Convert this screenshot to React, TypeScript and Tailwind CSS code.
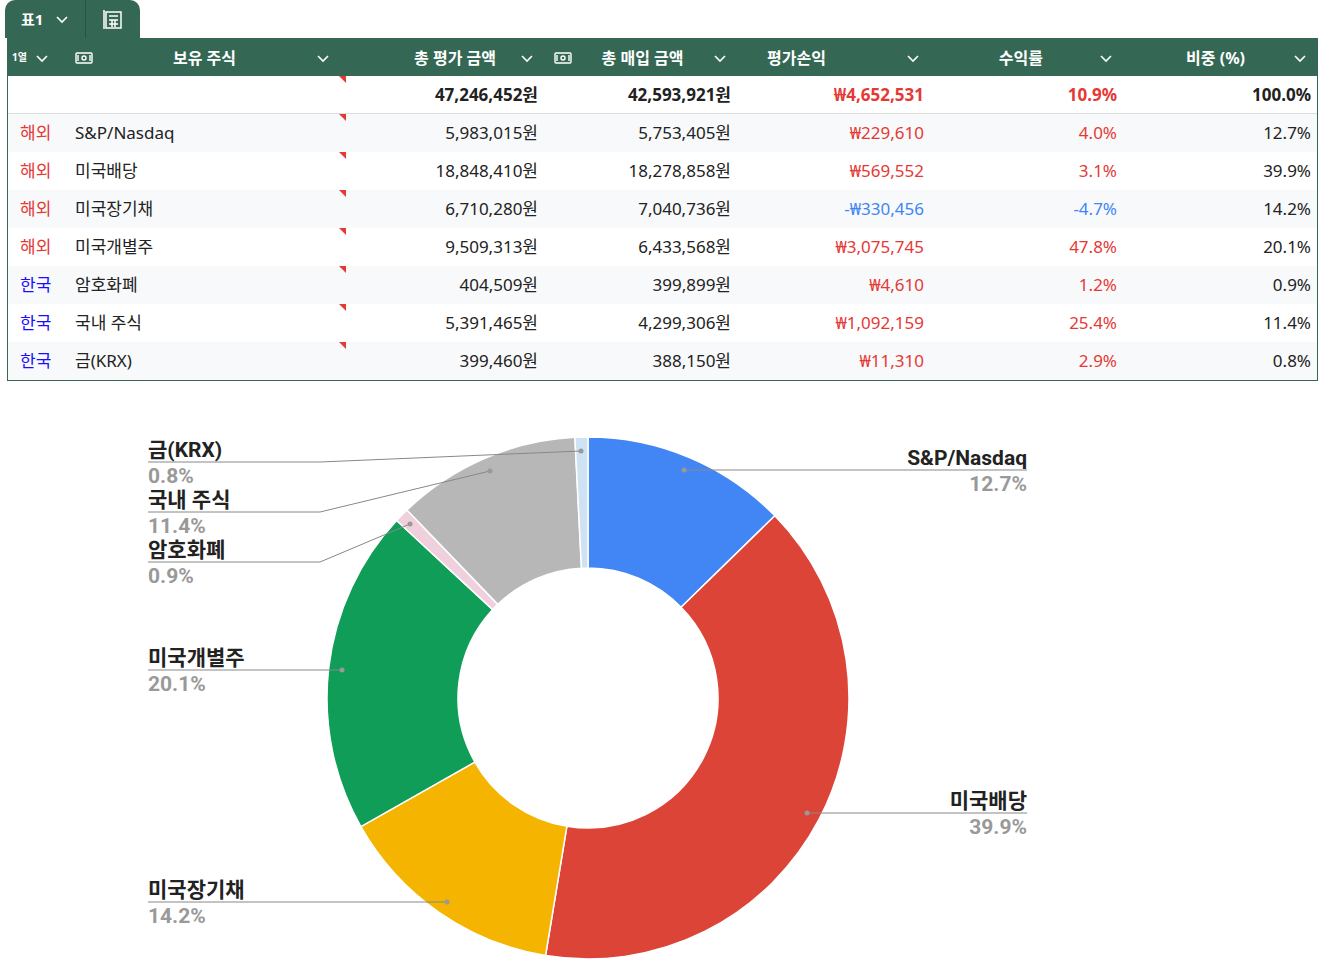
import React from "react";

const rows = [
  ["해외", "S&P/Nasdaq", "5,983,015원", "5,753,405원", "₩229,610", "4.0%", "12.7%", false],
  ["해외", "미국배당", "18,848,410원", "18,278,858원", "₩569,552", "3.1%", "39.9%", false],
  ["해외", "미국장기채", "6,710,280원", "7,040,736원", "-₩330,456", "-4.7%", "14.2%", true],
  ["해외", "미국개별주", "9,509,313원", "6,433,568원", "₩3,075,745", "47.8%", "20.1%", false],
  ["한국", "암호화폐", "404,509원", "399,899원", "₩4,610", "1.2%", "0.9%", false],
  ["한국", "국내 주식", "5,391,465원", "4,299,306원", "₩1,092,159", "25.4%", "11.4%", false],
  ["한국", "금(KRX)", "399,460원", "388,150원", "₩11,310", "2.9%", "0.8%", false],
] as const;

const Chev = () => (
  <svg width="14" height="14" viewBox="0 0 14 14" fill="none" stroke="white" strokeWidth="1.6"><path d="M2 5l5 5 5-5" /></svg>
);
const Money = () => (
  <svg width="18" height="12" viewBox="0 0 18 12" fill="none" stroke="white" strokeWidth="1.4"><rect x="1" y="1" width="16" height="10" rx="1" /><circle cx="9" cy="6" r="2" /><path d="M3 3v6M15 3v6" /></svg>
);

const segs = [
  [12.7, "#4285F4"], [39.9, "#DB4437"], [14.2, "#F4B400"], [20.1, "#0F9D58"], [0.9, "#F0D0DC"], [11.4, "#B7B7B7"], [0.8, "#CFE2F3"],
] as const;

function Donut() {
  const cx = 588, cy = 317, R = 261, r = 130;
  let a = 0;
  const pt = (ang: number, rad: number) => [cx + rad * Math.sin(ang), cy - rad * Math.cos(ang)];
  const paths = segs.map(([v, c], i) => {
    const a0 = (a / 100) * Math.PI * 2; a += v; const a1 = (a / 100) * Math.PI * 2;
    const large = a1 - a0 > Math.PI ? 1 : 0;
    const [x0, y0] = pt(a0, R), [x1, y1] = pt(a1, R), [x2, y2] = pt(a1, r), [x3, y3] = pt(a0, r);
    return <path key={i} d={`M${x0} ${y0}A${R} ${R} 0 ${large} 1 ${x1} ${y1}L${x2} ${y2}A${r} ${r} 0 ${large} 0 ${x3} ${y3}Z`} fill={c} stroke="white" strokeWidth="1.5" />;
  });
  const L = (name: string, pct: string, y: number, dx: number, dy: number, right: boolean, bend?: number) => (
    <g>
      {right ? <path d={`M${dx} ${dy}H1027`} stroke="#888" fill="none" /> : <path d={bend ? `M148 ${y}H320L${dx} ${dy}` : `M148 ${y}H${dx}`} stroke="#888" fill="none" />}
      <circle cx={dx} cy={dy} r="2.5" fill="#999" />
      <text x={right ? 1027 : 148} y={y - 5} textAnchor={right ? "end" : "start"} fontSize="21" fontWeight="700" fill="#222">{name}</text>
      <text x={right ? 1027 : 148} y={y + 21} textAnchor={right ? "end" : "start"} fontSize="21" fontWeight="700" fill="#999">{pct}</text>
    </g>
  );
  return (
    <svg width="1336" height="593" style={{ fontFamily: "Roboto, 'Noto Sans CJK KR', sans-serif" }}>
      {paths}
      {L("S&P/Nasdaq", "12.7%", 89, 684, 89, true)}
      {L("미국배당", "39.9%", 432, 807, 432, true)}
      {L("미국장기채", "14.2%", 521, 447, 521, false)}
      {L("미국개별주", "20.1%", 289, 342, 289, false)}
      {L("암호화폐", "0.9%", 181, 410, 143, false, 1)}
      {L("국내 주식", "11.4%", 131, 490, 90, false, 1)}
      {L("금(KRX)", "0.8%", 81, 581, 70, false, 1)}
    </svg>
  );
}

export default function App() {
  const cols = "grid grid-cols-[55px_283px_200px_193px_193px_193px_194px]";
  return (
    <div className="w-[1336px] h-[973px] bg-white text-[17px] text-[#222]" style={{ fontFamily: "'Noto Sans', 'Noto Sans CJK KR', sans-serif" }}>
      <div className="flex pl-[5px] h-[38px]">
        <div className="flex bg-[#356854] rounded-t-[10px] text-white">
          <div className="flex items-center gap-3 px-4 font-bold text-[15px] border-r border-[#2a5442]">표1 <Chev /></div>
          <div className="flex items-center px-4">
            <svg width="22" height="22" viewBox="0 0 22 22" fill="none" stroke="white" strokeWidth="1.5"><rect x="4" y="4" width="15" height="16" /><path d="M2 2v19M7 8h9M7 12h9M7 16h9M10 12v7M13 12v7" /></svg>
          </div>
        </div>
      </div>
      <div className="mx-[7px] w-[1311px] border border-[#356854]">
        <div className={`${cols} h-[37px] bg-[#356854] text-white font-bold text-[16px] items-center`}>
          <div className="flex items-center gap-2 pl-1"><span className="text-[10px]">1열</span><Chev /></div>
          <div className="flex items-center justify-between pl-3 pr-4"><Money /><span>보유 주식</span><Chev /></div>
          <div className="flex items-center justify-end gap-6 pr-3"><span>총 평가 금액</span><Chev /></div>
          <div className="flex items-center justify-between pl-2 pr-3"><Money /><span>총 매입 금액</span><Chev /></div>
          <div className="flex items-center justify-end gap-20 pr-3"><span>평가손익</span><Chev /></div>
          <div className="flex items-center justify-end gap-14 pr-3"><span>수익률</span><Chev /></div>
          <div className="flex items-center justify-end gap-12 pr-3"><span>비중 (%)</span><Chev /></div>
        </div>
        <div className={`${cols} h-[38px] items-center font-bold border-b border-[#ddd] text-[17px]`}>
          <div /><div className="relative h-full"><span className="absolute right-0 top-0 border-t-[7px] border-l-[7px] border-t-[#e53935] border-l-transparent" /></div>
          <div className="text-right pr-2">47,246,452원</div>
          <div className="text-right pr-2">42,593,921원</div>
          <div className="text-right pr-2 text-[#e53935]">₩4,652,531</div>
          <div className="text-right pr-2 text-[#e53935]">10.9%</div>
          <div className="text-right pr-2">100.0%</div>
        </div>
        {rows.map((r, i) => (
          <div key={i} className={`${cols} h-[38px] items-center ${i % 2 === 0 ? "bg-[#f8f9fa]" : "bg-white"}`}>
            <div className={`h-full flex items-center pl-3 ${r[0] === "해외" ? "text-[#e53935]" : "text-[#1a0dff]"}`}>{r[0]}</div>
            <div className="relative h-full flex items-center pl-3 bg-white/0">{r[1]}<span className="absolute right-0 top-0 border-t-[7px] border-l-[7px] border-t-[#e53935] border-l-transparent" /></div>
            <div className="text-right pr-2">{r[2]}</div>
            <div className="text-right pr-2">{r[3]}</div>
            <div className={`text-right pr-2 ${r[7] ? "text-[#4285F4]" : "text-[#e53935]"}`}>{r[4]}</div>
            <div className={`text-right pr-2 ${r[7] ? "text-[#4285F4]" : "text-[#e53935]"}`}>{r[5]}</div>
            <div className="text-right pr-2">{r[6]}</div>
          </div>
        ))}
      </div>
      <Donut />
    </div>
  );
}
